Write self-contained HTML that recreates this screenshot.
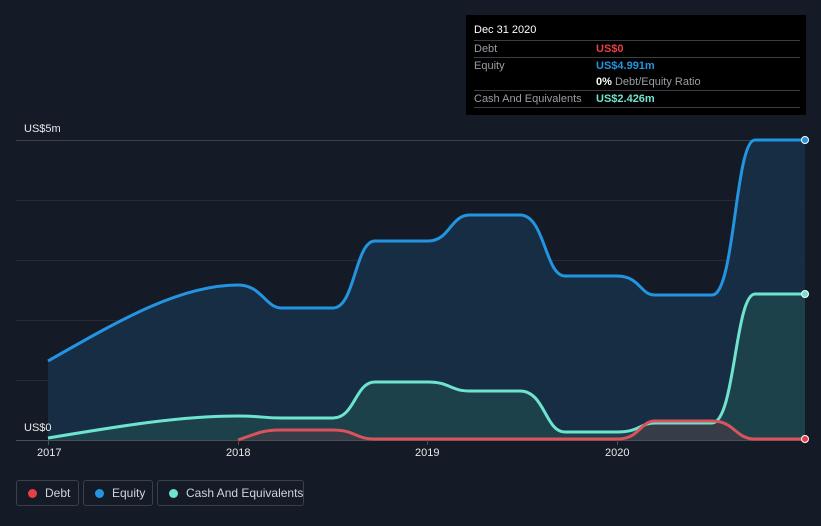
<!DOCTYPE html>
<html><head><meta charset="utf-8"><style>
html,body{margin:0;width:821px;height:526px;overflow:hidden}
body{background:#151b26;font-family:"Liberation Sans",sans-serif;position:relative}
.tt{position:absolute;left:466px;top:15px;width:340px;height:100px;background:#000;font-size:11px;color:#9a9da3}
.tt .r{position:absolute;left:8px;right:6px;border-top:1px solid #3a3d42;height:17px}
.lg{position:absolute;top:480px;height:26px;border:1px solid #3a3f48;border-radius:3px;color:#d0d3d8;font-size:12px;line-height:24px;box-sizing:border-box;white-space:nowrap}
.lg i{position:absolute;left:11px;top:8px;width:9px;height:9px;border-radius:50%}
.lg span{position:absolute;left:28px}
.ax{position:absolute;color:#e6e8eb;font-size:11px}
</style></head><body>
<svg width="821" height="526" style="position:absolute;left:0;top:0">
<g stroke="#262c36" stroke-width="1">
<line x1="16" y1="140.5" x2="805" y2="140.5" stroke="#3a3f48"/><line x1="16" y1="200.5" x2="805" y2="200.5"/><line x1="16" y1="260.5" x2="805" y2="260.5"/><line x1="16" y1="320.5" x2="805" y2="320.5"/><line x1="16" y1="380.5" x2="805" y2="380.5"/>
</g>
<path d="M48 361 C120 320 180 285 238 285 C262 285 265 308 282 308 L333 308 C355 308 355 241 375 241 L428 241 C450 241 450 215 470 215 L520 215 C545 215 545 276 565 276 L617 276 C640 276 640 295 655 295 L712 295 C735 295 735 140 755 140 L805 140 L805 440 L48 440 Z" fill="#173049" opacity=".85"/>
<path d="M48 438 C120 426 180 416 238 416 C262 416 262 418 282 418 L333 418 C355 418 355 382 375 382 L428 382 C450 382 450 391 470 391 L520 391 C545 391 545 432 565 432 L617 432 C640 432 640 423 655 423 L712 423 C735 423 735 294 755 294 L805 294 L805 440 L48 440 Z" fill="#214a4e" opacity=".7"/>
<path d="M238 440 C260 432 265 430 280 430 L333 430 C355 430 355 439 375 439 L617 439 C640 439 640 421 655 421 L712 421 C735 421 735 439 755 439 L805 439 L805 440 L238 440Z" fill="#4a3a44" opacity=".6"/>
<line x1="16" y1="440.5" x2="805" y2="440.5" stroke="#4a4f58"/>
<path d="M48 361 C120 320 180 285 238 285 C262 285 265 308 282 308 L333 308 C355 308 355 241 375 241 L428 241 C450 241 450 215 470 215 L520 215 C545 215 545 276 565 276 L617 276 C640 276 640 295 655 295 L712 295 C735 295 735 140 755 140 L805 140" fill="none" stroke="#2394e0" stroke-width="3"/>
<path d="M48 438 C120 426 180 416 238 416 C262 416 262 418 282 418 L333 418 C355 418 355 382 375 382 L428 382 C450 382 450 391 470 391 L520 391 C545 391 545 432 565 432 L617 432 C640 432 640 423 655 423 L712 423 C735 423 735 294 755 294 L805 294" fill="none" stroke="#6ee3cf" stroke-width="3"/>
<path d="M238 440 C260 432 265 430 280 430 L333 430 C355 430 355 439 375 439 L617 439 C640 439 640 421 655 421 L712 421 C735 421 735 439 755 439 L805 439" fill="none" stroke="#d9535d" stroke-width="3"/>
<circle cx="805" cy="140" r="3.5" fill="#2394e0" stroke="#fff" stroke-width="1"/>
<circle cx="805" cy="294" r="3.5" fill="#6ee3cf" stroke="#fff" stroke-width="1"/>
<circle cx="805" cy="439" r="3.5" fill="#e64046" stroke="#fff" stroke-width="1"/>
<g stroke="#4a4f58"><line x1="48.5" y1="440" x2="48.5" y2="445"/><line x1="238.5" y1="440" x2="238.5" y2="445"/><line x1="427.5" y1="440" x2="427.5" y2="445"/><line x1="617.5" y1="440" x2="617.5" y2="445"/></g>
</svg>
<div class="ax" style="left:24px;top:123px">US$5m</div>
<div class="ax" style="left:24px;top:422px">US$0</div>
<div class="ax" style="left:37px;top:447px">2017</div>
<div class="ax" style="left:226px;top:447px">2018</div>
<div class="ax" style="left:415px;top:447px">2019</div>
<div class="ax" style="left:605px;top:447px">2020</div>
<div class="tt">
<div style="position:absolute;left:8px;top:9px;color:#fff">Dec 31 2020</div>
<div class="r" style="top:25px"><span style="position:absolute;top:2px">Debt</span><span style="position:absolute;left:122px;top:2px;color:#e64046;font-weight:bold">US$0</span></div>
<div class="r" style="top:42px"><span style="position:absolute;top:2px">Equity</span><span style="position:absolute;left:122px;top:2px;color:#2394e0;font-weight:bold">US$4.991m</span><span style="position:absolute;left:122px;top:18px"><b style="color:#fff">0%</b> Debt/Equity Ratio</span></div>
<div class="r" style="top:75px"><span style="position:absolute;top:2px">Cash And Equivalents</span><span style="position:absolute;left:122px;top:2px;color:#6ee3cf;font-weight:bold">US$2.426m</span></div>
<div class="r" style="top:92px;height:0"></div>
</div>
<div class="lg" style="left:16px;width:63px"><i style="background:#e64046"></i><span>Debt</span></div>
<div class="lg" style="left:83px;width:70px"><i style="background:#2394e0"></i><span>Equity</span></div>
<div class="lg" style="left:157px;width:147px"><i style="background:#6ee3cf"></i><span>Cash And Equivalents</span></div>
</body></html>
